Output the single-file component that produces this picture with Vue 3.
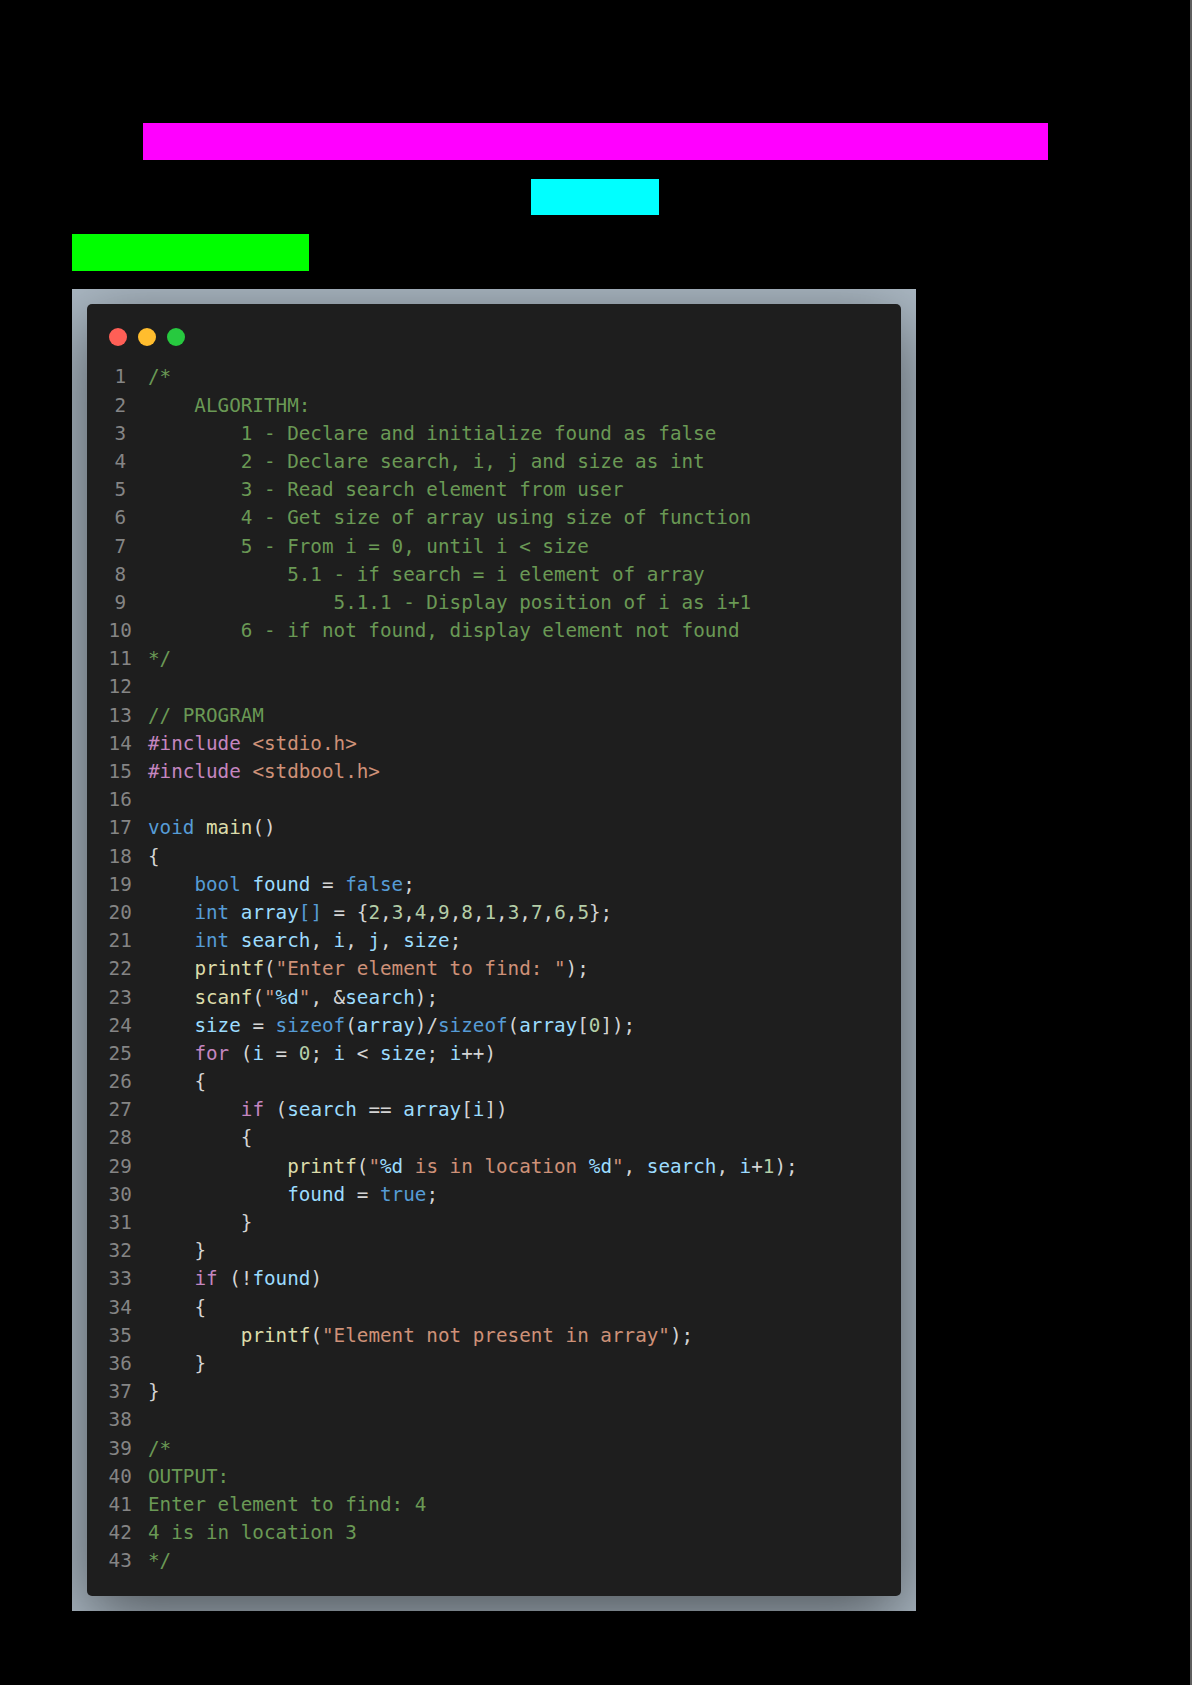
<script setup>
const C = 'c', K = 'k', P = 'p', F = 'f', V = 'v', S = 's', N = 'n', D = 'd'
const comment = (t) => [[C, t]]
const lines = [
  comment('/*'),
  comment('    ALGORITHM:'),
  comment('        1 - Declare and initialize found as false'),
  comment('        2 - Declare search, i, j and size as int'),
  comment('        3 - Read search element from user'),
  comment('        4 - Get size of array using size of function'),
  comment('        5 - From i = 0, until i < size'),
  comment('            5.1 - if search = i element of array'),
  comment('                5.1.1 - Display position of i as i+1'),
  comment('        6 - if not found, display element not found'),
  comment('*/'),
  [],
  comment('// PROGRAM'),
  [[P, '#include '], [S, '<stdio.h>']],
  [[P, '#include '], [S, '<stdbool.h>']],
  [],
  [[K, 'void '], [F, 'main'], [D, '()']],
  [[D, '{']],
  [[D, '    '], [K, 'bool '], [V, 'found'], [D, ' = '], [K, 'false'], [D, ';']],
  [[D, '    '], [K, 'int '], [V, 'array'], [K, '[]'], [D, ' = {'], [N, '2'], [D, ','], [N, '3'], [D, ','], [N, '4'], [D, ','], [N, '9'], [D, ','], [N, '8'], [D, ','], [N, '1'], [D, ','], [N, '3'], [D, ','], [N, '7'], [D, ','], [N, '6'], [D, ','], [N, '5'], [D, '};']],
  [[D, '    '], [K, 'int '], [V, 'search'], [D, ', '], [V, 'i'], [D, ', '], [V, 'j'], [D, ', '], [V, 'size'], [D, ';']],
  [[D, '    '], [F, 'printf'], [D, '('], [S, '"Enter element to find: "'], [D, ');']],
  [[D, '    '], [F, 'scanf'], [D, '('], [S, '"'], [V, '%d'], [S, '"'], [D, ', &'], [V, 'search'], [D, ');']],
  [[D, '    '], [V, 'size'], [D, ' = '], [K, 'sizeof'], [D, '('], [V, 'array'], [D, ')/'], [K, 'sizeof'], [D, '('], [V, 'array'], [D, '['], [N, '0'], [D, ']);']],
  [[D, '    '], [P, 'for'], [D, ' ('], [V, 'i'], [D, ' = '], [N, '0'], [D, '; '], [V, 'i'], [D, ' < '], [V, 'size'], [D, '; '], [V, 'i'], [D, '++)']],
  [[D, '    {']],
  [[D, '        '], [P, 'if'], [D, ' ('], [V, 'search'], [D, ' == '], [V, 'array'], [D, '['], [V, 'i'], [D, '])']],
  [[D, '        {']],
  [[D, '            '], [F, 'printf'], [D, '('], [S, '"'], [V, '%d'], [S, ' is in location '], [V, '%d'], [S, '"'], [D, ', '], [V, 'search'], [D, ', '], [V, 'i'], [D, '+'], [N, '1'], [D, ');']],
  [[D, '            '], [V, 'found'], [D, ' = '], [K, 'true'], [D, ';']],
  [[D, '        }']],
  [[D, '    }']],
  [[D, '    '], [P, 'if'], [D, ' (!'], [V, 'found'], [D, ')']],
  [[D, '    {']],
  [[D, '        '], [F, 'printf'], [D, '('], [S, '"Element not present in array"'], [D, ');']],
  [[D, '    }']],
  [[D, '}']],
  [],
  comment('/*'),
  comment('OUTPUT:'),
  comment('Enter element to find: 4'),
  comment('4 is in location 3'),
  comment('*/'),
]
</script>

<template>
  <div class="page">
    <div class="block magenta"></div>
    <div class="block cyan"></div>
    <div class="block green"></div>
    <div class="frame">
      <div class="window">
        <div class="dots">
          <span class="dot red"></span>
          <span class="dot yellow"></span>
          <span class="dot lime"></span>
        </div>
        <div class="code">
          <div v-for="(line, i) in lines" :key="i" class="line">
            <span class="num">{{ i + 1 }}</span>
            <span class="text"><span v-for="(tok, j) in line" :key="j" :class="tok[0]">{{ tok[1] }}</span></span>
          </div>
        </div>
      </div>
    </div>
  </div>
</template>

<style scoped>
.page {
  box-sizing: border-box;
  width: 1192px;
  height: 1685px;
  padding-top: 123px;
  background: #000;
  border-right: 2px solid #5f5f5f;
  overflow: hidden;
}
.block { height: 37px; }
.magenta { width: 905px; margin: 0 auto 19px; background: #ff00ff; }
.cyan { width: 128px; height: 36px; margin: 0 auto 19px; background: #00ffff; }
.green { width: 237px; margin: 0 0 18px 72px; background: #00ff00; }
.frame {
  box-sizing: border-box;
  width: 844px;
  height: 1322px;
  margin-left: 72px;
  padding: 15px;
  background: #abb8c3;
  overflow: hidden;
}
.window {
  box-sizing: border-box;
  height: 1292px;
  padding: 24px 0 0 21.6px;
  background: #1e1e1e;
  border-radius: 5px;
  box-shadow: 0 20px 68px rgba(0, 0, 0, 0.55);
}
.dots { display: flex; gap: 11.3px; height: 18px; margin-bottom: 17.4px; }
.dot { width: 18px; height: 18px; border-radius: 50%; }
.red { background: #ff5f56; }
.yellow { background: #ffbd2e; }
.lime { background: #27c93f; }
.code {
  font-family: "DejaVu Sans Mono", "Liberation Mono", monospace;
  font-size: 19.27px;
  line-height: 28.2px;
  color: #d4d4d4;
}
.line { display: flex; height: 28.2px; }
.num { flex: 0 0 23.2px; margin-right: 16.2px; text-align: center; color: #858585; }
.text { white-space: pre; }
.c { color: #6a9955; }
.k { color: #569cd6; }
.p { color: #c586c0; }
.f { color: #dcdcaa; }
.v { color: #9cdcfe; }
.s { color: #ce9178; }
.n { color: #b5cea8; }
.d { color: #d4d4d4; }
</style>
